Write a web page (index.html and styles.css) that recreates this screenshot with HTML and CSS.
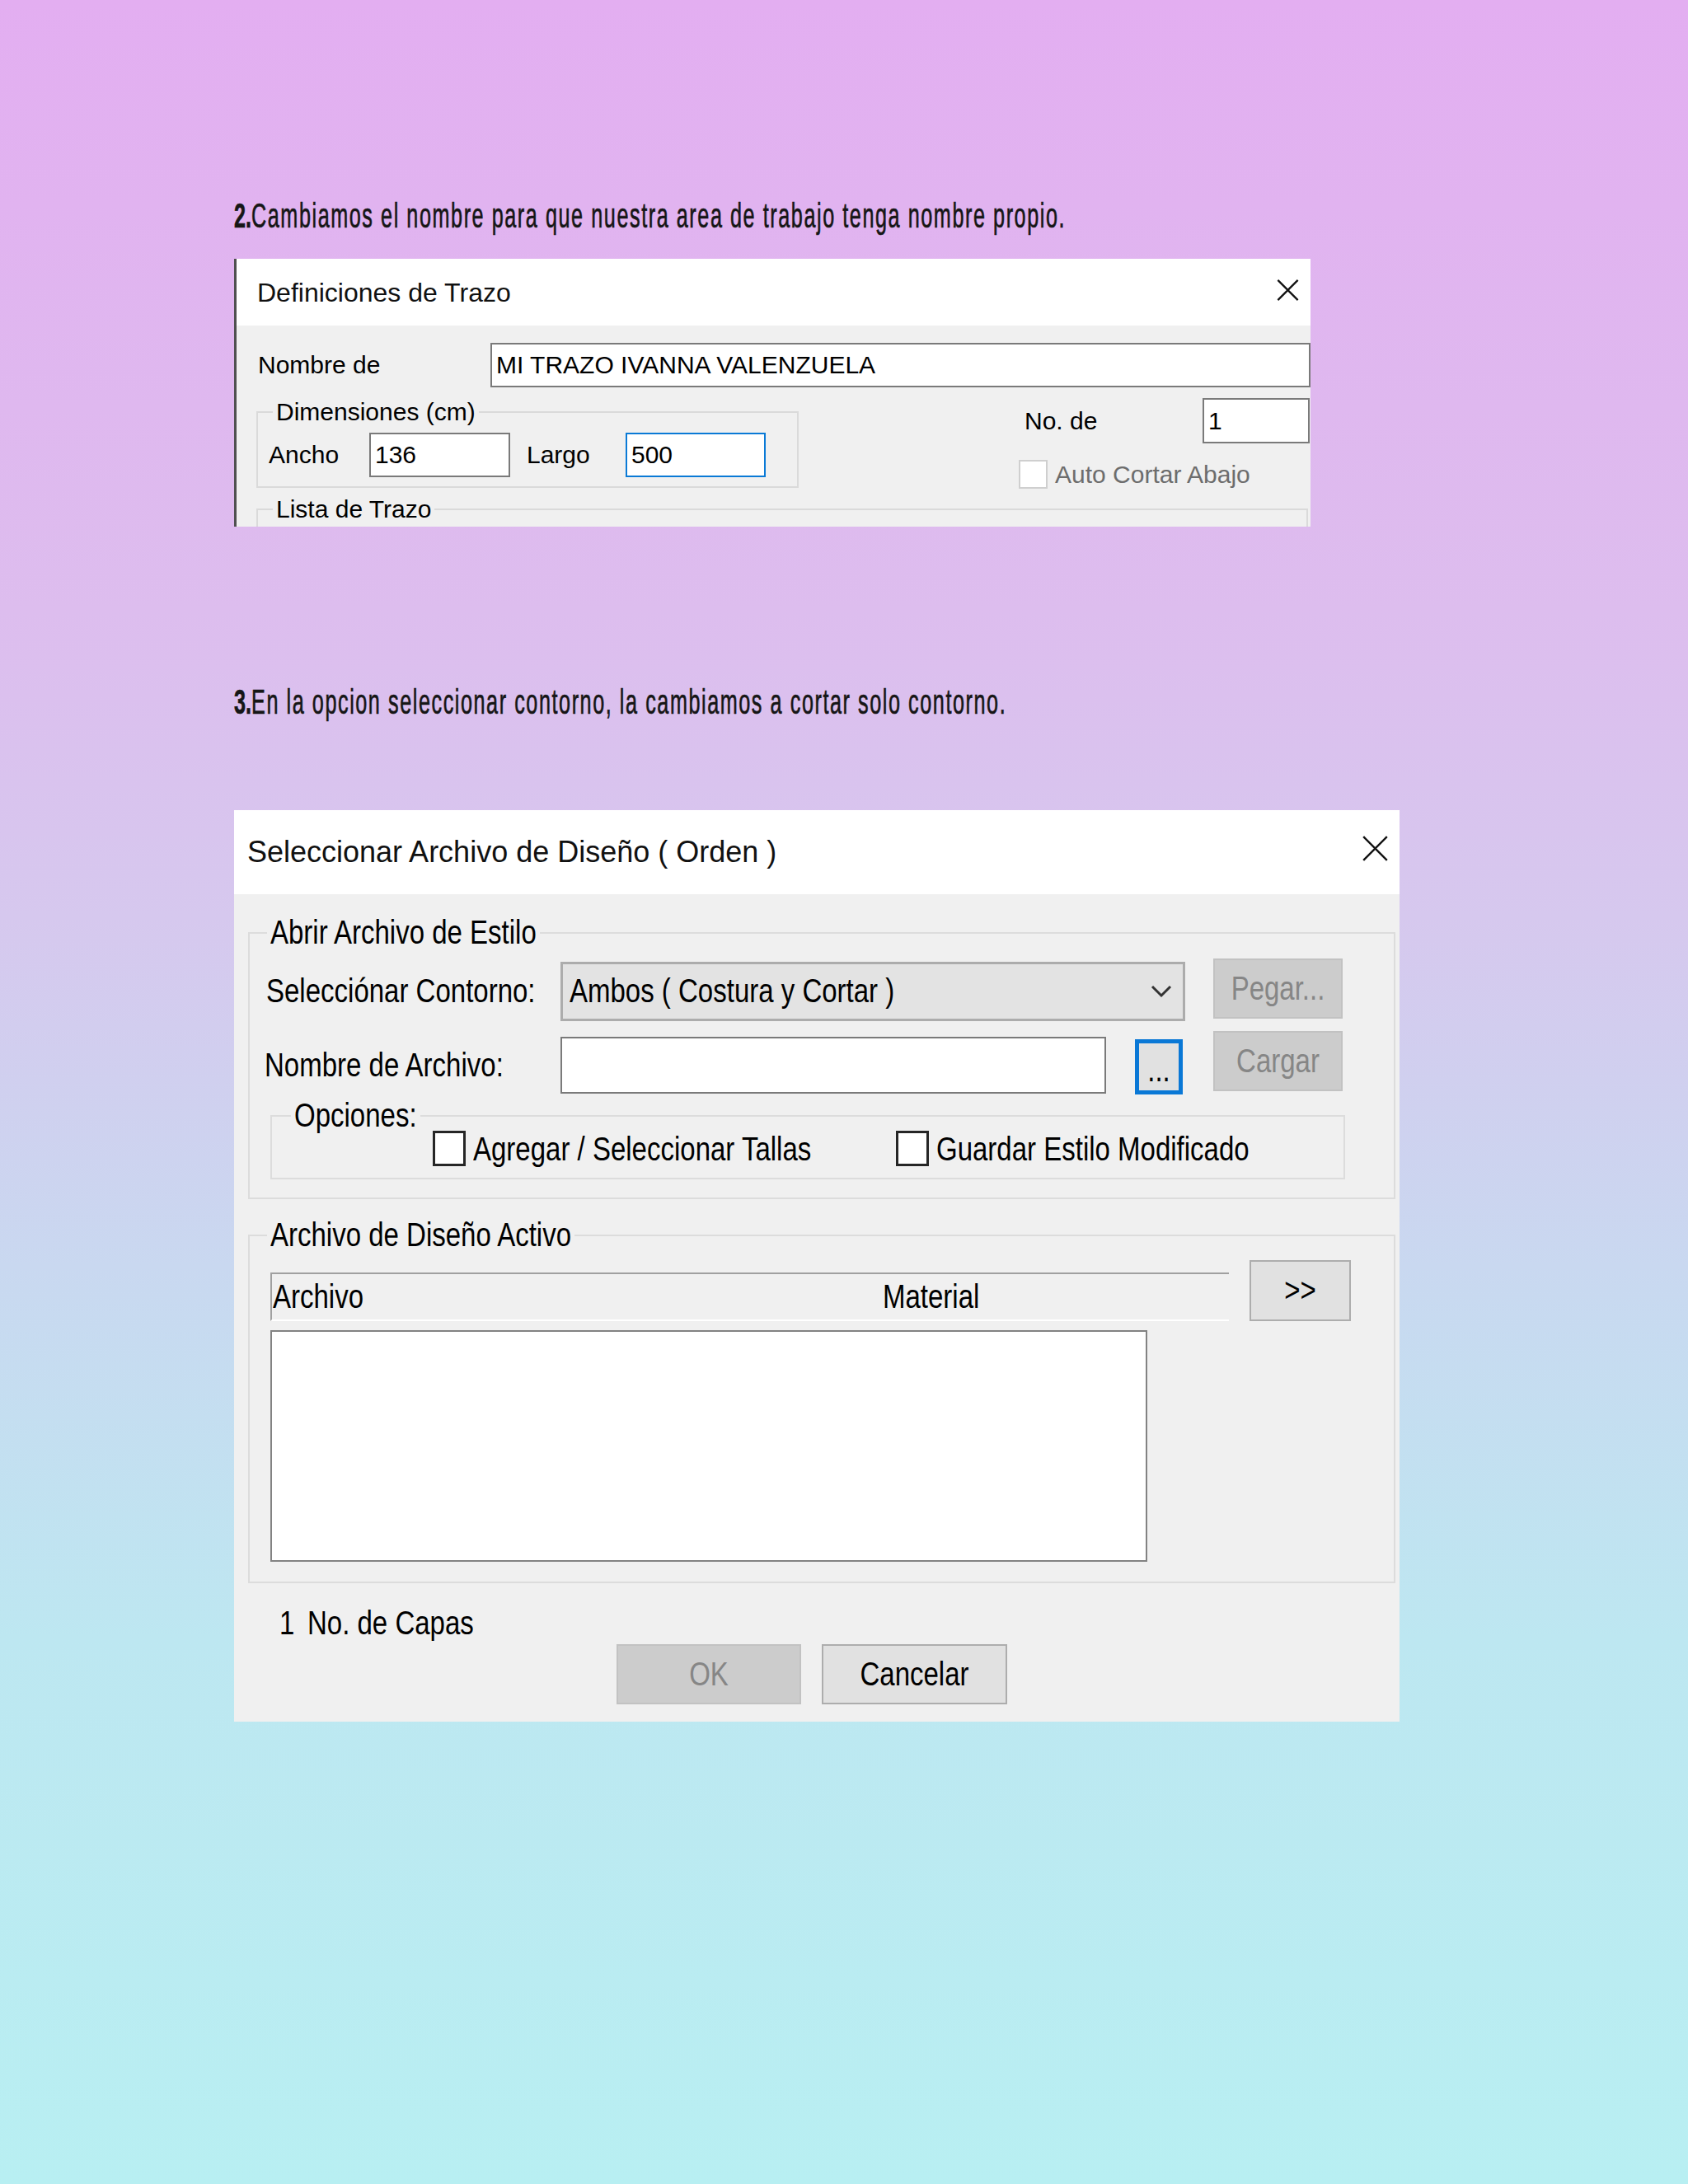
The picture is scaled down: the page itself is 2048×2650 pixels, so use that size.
FILE: index.html
```html
<!DOCTYPE html>
<html lang="es">
<head>
<meta charset="utf-8">
<title>Trazo</title>
<link rel="stylesheet" href="styles.css">
</head>
<body>
<div class="page">
  <p class="caption"><span class="caption-text"><b>2.</b>Cambiamos el nombre para que nuestra area de trabajo tenga nombre propio.</span></p>

  <div class="dlg dlg1">
    <div class="titlebar tb1">
      <span class="title1">Definiciones de Trazo</span>
      <svg class="close1" viewBox="0 0 30 30"><path d="M2 2L28 28M28 2L2 28" stroke="#111" stroke-width="2.4" fill="none"/></svg>
    </div>
    <div class="body1">
      <div class="r1">
        <span class="lbl l-nombre">Nombre de</span>
        <div class="tb tb-name">MI TRAZO IVANNA VALENZUELA</div>
      </div>
      <div class="r2">
        <fieldset class="grp dims">
          <legend>Dimensiones (cm)</legend>
          <div class="dims-row">
            <span class="lbl w-ancho">Ancho</span>
            <div class="tb tb-ancho">136</div>
            <span class="lbl w-largo">Largo</span>
            <div class="tb tb-largo">500</div>
          </div>
        </fieldset>
        <div class="rightcol">
          <div class="noline">
            <span class="lbl w-no">No. de</span>
            <div class="tb tb-no">1</div>
          </div>
          <div class="chkline">
            <span class="chk1"></span>
            <span class="lbl gray">Auto Cortar Abajo</span>
          </div>
        </div>
      </div>
      <fieldset class="grp lista">
        <legend>Lista de Trazo</legend>
      </fieldset>
    </div>
  </div>

  <p class="caption cap3"><span class="caption-text"><b>3.</b>En la opcion seleccionar contorno, la cambiamos a cortar solo contorno.</span></p>

  <div class="dlg dlg2">
    <div class="titlebar tb2">
      <span class="title2">Seleccionar Archivo de Diseño ( Orden )</span>
      <svg class="close2" viewBox="0 0 30 30"><path d="M2 2L28 28M28 2L2 28" stroke="#111" stroke-width="2.2" fill="none"/></svg>
    </div>
    <div class="body2">
      <fieldset class="grp2 g1">
        <legend><span class="t">Abrir Archivo de Estilo</span></legend>
        <div class="rowA">
          <span class="lbl2 la"><span class="t">Selecciónar Contorno:</span></span>
          <div class="combo">
            <span class="t">Ambos ( Costura y Cortar )</span>
            <svg class="chev" viewBox="0 0 26 18"><path d="M2 3L13 14L24 3" fill="none" stroke="#333" stroke-width="3"/></svg>
          </div>
          <div class="btn dis pegar"><span class="t">Pegar...</span></div>
        </div>
        <div class="rowB">
          <span class="lbl2 lb"><span class="t">Nombre de Archivo:</span></span>
          <div class="file-in"></div>
          <div class="btn dots"><span class="t">...</span></div>
          <div class="btn dis cargar"><span class="t">Cargar</span></div>
        </div>
        <fieldset class="grp2 opc">
          <legend><span class="t">Opciones:</span></legend>
          <div class="opc-row">
            <div class="opt opt1"><span class="chk2"></span><span class="opt-txt t">Agregar / Seleccionar Tallas</span></div>
            <div class="opt"><span class="chk2"></span><span class="opt-txt t">Guardar Estilo Modificado</span></div>
          </div>
        </fieldset>
      </fieldset>

      <fieldset class="grp2 g2">
        <legend><span class="t">Archivo de Diseño Activo</span></legend>
        <div class="hdr-row">
          <div class="hdr"><span class="h-arch"><span class="t">Archivo</span></span><span class="t">Material</span></div>
          <div class="btn more"><span class="t">&gt;&gt;</span></div>
        </div>
        <div class="listbox"></div>
      </fieldset>

      <div class="capas"><span class="capas-n t">1</span><span class="t">No. de Capas</span></div>
      <div class="btnrow">
        <div class="btn dis ok"><span class="t">OK</span></div>
        <div class="btn cancel"><span class="t">Cancelar</span></div>
      </div>
    </div>
  </div>
</div>
</body>
</html>
```

FILE: styles.css
```css
html, body {
  margin: 0;
  padding: 0;
}
body {
  width: 2048px;
  min-height: 2650px;
  background: linear-gradient(180deg, #e3aef1 0%, #ddbdee 28%, #d6c8ee 42%, #c9d8f0 58%, #bde7f1 75%, #b8eff2 100%);
  font-family: "Liberation Sans", Arial, sans-serif;
  color: #000;
}
.page {
  padding: 237px 0 0 284px;
  height: 2413px;
}
.caption {
  margin: 0;
  height: 50px;
  font: 42px/50px "Liberation Sans", sans-serif;
  color: #161616;
  white-space: nowrap;
}
.caption-text {
  display: inline-block;
  transform: scaleX(0.6);
  transform-origin: 0 50%;
  letter-spacing: 2.6px;
  -webkit-text-stroke: 0.7px #161616;
}
.caption b {
  font-weight: bold;
  letter-spacing: 0;
}
.cap3 {
  margin-top: 188px;
}

/* ---------- Dialog 1 ---------- */
.dlg1 {
  margin-top: 27px;
  width: 1306px;
  height: 325px;
  box-sizing: border-box;
  border-left: 3px solid #505050;
  background: #f0f0f0;
  overflow: hidden;
}
.titlebar {
  background: #fff;
  display: flex;
  align-items: center;
}
.tb1 {
  height: 81px;
  padding: 0 13px 0 25px;
}
.title1 {
  font: 32px/32px "Liberation Sans", sans-serif;
  color: #111;
}
.close1 {
  margin-left: auto;
  width: 29px;
  height: 28px;
  margin-top: -6px;
}
.body1 {
  height: 244px;
  font: 30px/30px "Liberation Sans", sans-serif;
}
.lbl {
  white-space: nowrap;
}
.r1 {
  display: flex;
  align-items: center;
  margin-top: 21px;
  height: 54px;
  padding-left: 26px;
}
.l-nombre {
  width: 282px;
  flex: none;
}
.tb {
  box-sizing: border-box;
  background: #fff;
  border: 2px solid #7a7a7a;
  display: flex;
  align-items: center;
  padding-left: 5px;
}
.tb-name {
  flex: 1;
  height: 54px;
}
.r2 {
  display: flex;
  margin-top: 15px;
  padding-left: 24px;
}
.grp {
  margin: 0;
  padding: 0;
  border: 2px solid #dadada;
  min-width: 0;
  box-sizing: border-box;
}
.grp legend {
  font: 30px/30px "Liberation Sans", sans-serif;
  padding: 0 4px;
  margin-left: 18px;
}
.dims {
  width: 658px;
  height: 107px;
  flex: none;
}
.dims-row {
  display: flex;
  align-items: center;
  margin-top: 10px;
  padding-left: 13px;
}
.w-ancho {
  width: 122px;
}
.tb-ancho {
  width: 171px;
  height: 54px;
}
.w-largo {
  margin-left: 20px;
  width: 120px;
}
.tb-largo {
  width: 170px;
  height: 54px;
  border-color: #0a7ad6;
}
.rightcol {
  margin-left: 267px;
  margin-top: -2px;
}
.noline {
  display: flex;
  align-items: center;
  height: 55px;
}
.w-no {
  width: 223px;
  padding-left: 7px;
  box-sizing: border-box;
}
.tb-no {
  width: 130px;
  height: 55px;
}
.chkline {
  display: flex;
  align-items: center;
  margin-top: 20px;
}
.chk1 {
  width: 35px;
  height: 35px;
  box-sizing: border-box;
  border: 2px solid #cfcfcf;
  background: #fff;
}
.gray {
  color: #6d6d6d;
  margin-left: 9px;
}
.lista {
  margin: 10px 0 0 24px;
  width: 1276px;
  height: 200px;
}

/* ---------- Dialog 2 ---------- */
.dlg2 {
  margin-top: 106px;
  width: 1414px;
  height: 1106px;
  background: #f0f0f0;
  overflow: hidden;
}
.tb2 {
  height: 102px;
  padding: 0 13px 0 16px;
  box-sizing: border-box;
}
.title2 {
  font: 36px/36px "Liberation Sans", sans-serif;
  color: #111;
}
.close2 {
  margin-left: auto;
  width: 33px;
  height: 33px;
  margin-bottom: 10px;
}
.body2 {
  font: 33px/40px "Liberation Sans", sans-serif;
}
.t {
  display: inline-block;
  line-height: 40px;
  transform: scaleY(1.22);
  white-space: nowrap;
}
.grp2 {
  margin: 0;
  padding: 0;
  border: 2px solid #dcdcdc;
  min-width: 0;
  box-sizing: border-box;
}
.grp2 legend {
  font: 33px/40px "Liberation Sans", sans-serif;
  padding: 0 4px;
  margin-left: 21px;
}
.g1 {
  margin: 27px 0 0 17px;
  width: 1392px;
  height: 343px;
}
.rowA,
.rowB {
  display: flex;
  align-items: flex-start;
}
.rowA {
  margin-top: 11px;
  padding-left: 20px;
}
.lbl2 {
  display: flex;
  align-items: center;
  white-space: nowrap;
  flex: none;
}
.la {
  width: 357px;
  height: 72px;
  margin-top: 4px;
}
.combo {
  margin-top: 4px;
  width: 758px;
  height: 72px;
  box-sizing: border-box;
  border: 3px solid #acacac;
  background: #e3e3e3;
  display: flex;
  align-items: center;
  padding: 0 13px 0 8px;
}
.chev {
  margin-left: auto;
  width: 26px;
  height: 18px;
}
.btn {
  box-sizing: border-box;
  border: 2px solid #adadad;
  background: #e1e1e1;
  display: flex;
  align-items: center;
  justify-content: center;
  flex: none;
}
.btn.dis {
  background: #cccccc;
  border-color: #c2c2c2;
  color: #868686;
}
.pegar {
  margin-left: 34px;
  width: 157px;
  height: 73px;
}
.rowB {
  margin-top: 12px;
  padding-left: 18px;
}
.lb {
  width: 359px;
  height: 69px;
  margin-top: 7px;
}
.file-in {
  margin-top: 7px;
  width: 662px;
  height: 69px;
  box-sizing: border-box;
  border: 2px solid #7a7a7a;
  background: #fff;
}
.dots {
  margin: 10px 0 0 35px;
  width: 58px;
  height: 67px;
  border: 5px solid #0a78d6;
  align-items: flex-end;
  padding-bottom: 4px;
}
.cargar {
  margin-left: 37px;
  width: 157px;
  height: 73px;
}
.opc {
  margin: 6px 0 0 25px;
  width: 1304px;
  height: 97px;
}
.grp2.opc legend {
  margin-left: 23px;
}
.opc-row {
  display: flex;
  align-items: center;
  margin-top: -3px;
  padding-left: 195px;
}
.opt {
  display: flex;
  align-items: center;
}
.opt1 {
  width: 562px;
}
.chk2 {
  width: 40px;
  height: 43px;
  box-sizing: border-box;
  border: 3px solid #262626;
  background: #fff;
  flex: none;
}
.opt-txt {
  margin-left: 9px;
  margin-top: 4px;
}
.g2 {
  margin: 24px 0 0 17px;
  width: 1392px;
  height: 442px;
}
.hdr-row {
  display: flex;
  align-items: flex-start;
  margin-top: 10px;
  padding-left: 25px;
}
.hdr {
  margin-top: 15px;
  width: 1163px;
  height: 59px;
  box-sizing: border-box;
  border-top: 2px solid #a0a0a0;
  border-left: 2px solid #a0a0a0;
  border-bottom: 2px solid #ffffff;
  background: #f0f0f0;
  display: flex;
  align-items: center;
  padding-left: 1px;
  white-space: nowrap;
}
.h-arch {
  width: 740px;
}
.more {
  margin-left: 25px;
  width: 123px;
  height: 74px;
}
.listbox {
  margin: 11px 0 0 25px;
  width: 1064px;
  height: 281px;
  box-sizing: border-box;
  border: 2px solid #828282;
  background: #fff;
}
.capas {
  margin: 29px 0 0 55px;
  height: 40px;
  white-space: nowrap;
}
.capas-n {
  width: 34px;
}
.btnrow {
  display: flex;
  gap: 25px;
  margin: 5px 0 0 464px;
}
.ok {
  width: 224px;
  height: 73px;
}
.cancel {
  width: 225px;
  height: 73px;
}
```
